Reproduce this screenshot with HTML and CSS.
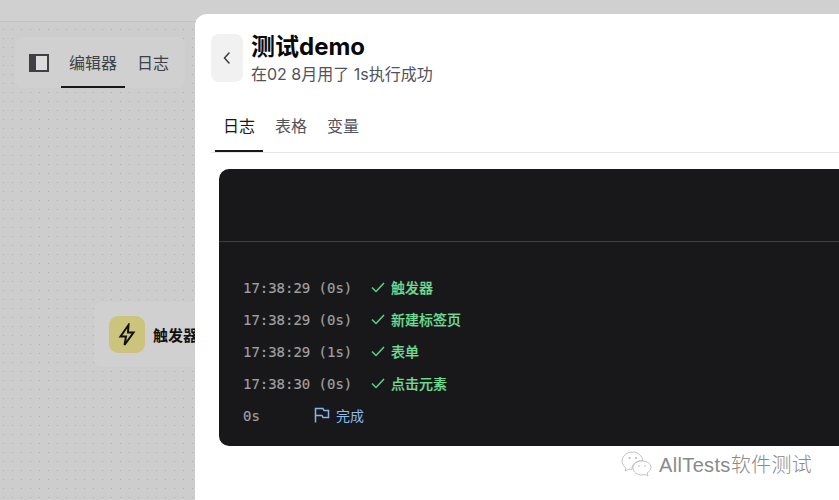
FILE: index.html
```html
<!DOCTYPE html>
<html lang="zh">
<head>
<meta charset="utf-8">
<title>测试demo</title>
<link rel="stylesheet" href="styles.css">
</head>
<body>
<div class="app">
  <header class="topbar"></header>
  <main class="canvas">
    <nav class="toolbar">
      <svg class="sidebar-icon" width="20" height="18" viewBox="0 0 20 18"><rect width="20" height="18" fill="#3f3f46"/><rect x="7" y="2" width="11" height="14" fill="#dcdcdc"/></svg>
      <a class="tool-tab tool-tab-active">编辑器</a>
      <a class="tool-tab">日志</a>
    </nav>
    <div class="node">
      <span class="node-icon">
        <svg width="20" height="24" viewBox="0 0 20 24" fill="none" stroke="#111" stroke-width="2" stroke-linejoin="miter"><path d="M11.500 2 3.500 13.500H9L7.500 22 16.500 9.500H11Z"/></svg>
      </span>
      <span class="node-label">触发器</span>
    </div>
  </main>
  <section class="drawer">
    <div class="drawer-head">
      <button class="back">
        <svg width="10" height="14" viewBox="0 0 10 14" fill="none" stroke="#3f3f46" stroke-width="1.6" stroke-linecap="round" stroke-linejoin="round"><path d="M7 2 2.500 7 7 12"/></svg>
      </button>
      <div class="head-text">
        <h1>测试demo</h1>
        <p>在02 8月用了 1s执行成功</p>
      </div>
    </div>
    <div class="tabs">
      <a class="tab tab-active">日志</a>
      <a class="tab">表格</a>
      <a class="tab">变量</a>
    </div>
    <div class="terminal">
      <div class="term-head"></div>
      <div class="term-body">
        <div class="row"><span class="time">17:38:29 (0s)</span><svg class="check" width="14" height="14" viewBox="0 0 14 14"><path d="M1 7.500 5 11.500 13 3"/></svg><span class="ok">触发器</span></div>
        <div class="row"><span class="time">17:38:29 (0s)</span><svg class="check" width="14" height="14" viewBox="0 0 14 14"><path d="M1 7.500 5 11.500 13 3"/></svg><span class="ok">新建标签页</span></div>
        <div class="row"><span class="time">17:38:29 (1s)</span><svg class="check" width="14" height="14" viewBox="0 0 14 14"><path d="M1 7.500 5 11.500 13 3"/></svg><span class="ok">表单</span></div>
        <div class="row"><span class="time">17:38:30 (0s)</span><svg class="check" width="14" height="14" viewBox="0 0 14 14"><path d="M1 7.500 5 11.500 13 3"/></svg><span class="ok">点击元素</span></div>
        <div class="row"><span class="time time-total">0s</span><svg class="flag" width="16" height="16" viewBox="0 0 16 16"><path d="M1.500 15.500V1.500H9L10 3.500H14.500V10.500H9L8 8.500H1.500"/></svg><span class="done">完成</span></div>
      </div>
    </div>
  </section>
  <div class="watermark">
    <svg width="32" height="26" viewBox="0 0 32 26" fill="#fff" stroke="#b4b4b4" stroke-width="0.8"><path d="M12 1C6 1 1 5 1 10c0 3 1.500 5 4 7l-1 3 4-2c1 .3 2 .5 3 .5-.5-5 4-9 11-9C21 5 17 1 12 1Z"/><path d="M21 10c-5 0-9 3-9 7s4 7 9 7c1 0 2-.2 3-.5l3 1.500-1-3c2-1.500 4-3 4-5.500 0-4-4-6.500-9-6.500Z"/><circle cx="8.500" cy="7" r="1" fill="#b4b4b4" stroke="none"/><circle cx="15" cy="7" r="1" fill="#b4b4b4" stroke="none"/><circle cx="18" cy="15" r=".8" fill="#b4b4b4" stroke="none"/><circle cx="24" cy="15" r=".8" fill="#b4b4b4" stroke="none"/></svg>
    <span>AllTests软件测试</span>
  </div>
</div>
</body>
</html>
```

FILE: styles.css
```css
* { box-sizing: border-box; }
html, body { margin: 0; height: 100%; }
body { font-family: "Inter", "Noto Sans CJK SC", sans-serif; overflow: hidden; background: #d0d0d0; }
.app { position: relative; width: 839px; height: 500px; overflow: hidden; display: flex; flex-direction: column; }
.topbar { height: 22px; flex: none; background: #d0d0d0; border-bottom: 1px solid #c4c4c4; }
.canvas {
  position: relative; flex: 1;
  background-color: #cdcdcd;
  background-image: radial-gradient(circle at .5px .5px, #b0b0b0 .7px, transparent .71px);
  background-size: 9px 9px;
  background-position: 3px 7px;
}
.toolbar {
  position: absolute; left: 15px; top: 15px; width: 170px; height: 51px;
  background: #d0d0d0; border-radius: 8px; display: flex; align-items: center; padding-left: 14px;
}
.sidebar-icon { flex: none; margin-right: 12px; margin-top: 1px; }
.tool-tab { font-size: 16px; height: 51px; display: flex; align-items: center; justify-content: center; color: #3f3f46; padding: 0 8px; border-bottom: 2px solid transparent; }
.tool-tab-active { width: 64px; border-bottom-color: #18181b; margin-right: 4px; }
.node {
  position: absolute; left: 94px; top: 280px; width: 110px; height: 65px;
  background: #d0d0d0; border-radius: 8px; display: flex; align-items: center; gap: 8px; padding-left: 15px;
}
.node-icon { width: 36px; height: 37px; border-radius: 9px; background: #ccc47c; display: flex; align-items: center; justify-content: center; }
.node-label { font-size: 15px; font-weight: 600; color: #111; white-space: nowrap; }
.drawer {
  position: absolute; left: 195px; top: 14px; right: 0; bottom: 0;
  background: #fff; border-top-left-radius: 12px; padding: 20px 0 0 16px;
}
.drawer-head { display: flex; gap: 8px; height: 48px; }
.back { width: 32px; height: 48px; border: 0; border-radius: 8px; background: #f1f1f1; padding: 0; display: flex; align-items: center; justify-content: center; }
.head-text h1 { margin: 0; font-size: 24px; line-height: 26px; font-weight: 700; color: #09090b; white-space: nowrap; }
.head-text p { margin: 4px 0 0; font-size: 16px; line-height: 20px; color: #52525b; white-space: nowrap; }
.tabs { display: flex; gap: 4px; height: 50px; margin-top: 21px; padding-left: 4px; border-bottom: 1px solid #e4e4e7; }
.tab { width: 48px; height: 49px; font-size: 16px; color: #52525b; display: flex; align-items: center; justify-content: center; padding-bottom: 3px; border-bottom: 2px solid transparent; }
.tab-active { color: #18181b; border-bottom-color: #18181b; }
.terminal { margin: 16px 0 0 8px; height: 277px; background: #18181b; border-radius: 10px 0 0 10px; }
.term-head { height: 73px; border-bottom: 1px solid #3f3f46; }
.term-body { padding: 29px 0 0 24px; display: flex; flex-direction: column; }
.row { height: 32px; display: flex; align-items: center; }
.time { width: 128px; margin-top: 2px; font-family: "DejaVu Sans Mono", monospace; font-size: 14px; letter-spacing: -0.03px; color: #a1a1a1; flex: none; -webkit-text-stroke: .15px #a1a1a1; }
.time-total { width: 71px; }
.check { flex: none; fill: none; stroke: #5fd47f; stroke-width: 1.5; margin-right: 6px; }
.flag { flex: none; fill: none; stroke: #8ab4e8; stroke-width: 1.5; margin-right: 6px; }
.ok { font-size: 14px; font-weight: 500; color: #6fdc92; -webkit-text-stroke: .2px #6fdc92; }
.done { font-size: 14px; color: #8fbaec; }
.watermark { position: absolute; left: 621px; top: 449px; display: flex; align-items: center; gap: 6px; font-family: "Liberation Sans", "Noto Sans CJK SC", sans-serif; font-weight: 300; font-size: 20px; letter-spacing: .35px; color: #8a8a8a; white-space: nowrap; }
```
